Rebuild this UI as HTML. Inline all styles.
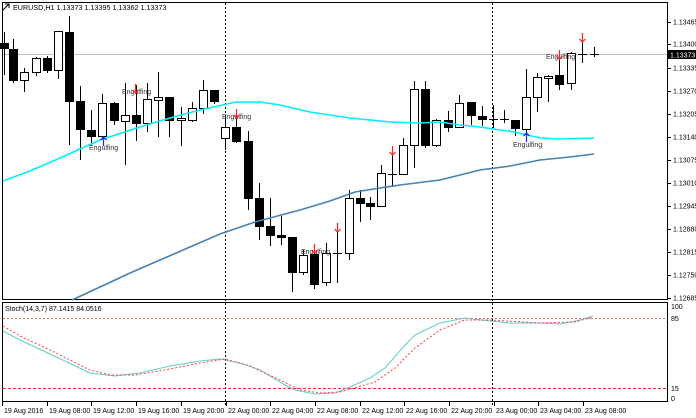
<!DOCTYPE html>
<html><head><meta charset="utf-8"><style>
html,body{margin:0;padding:0;background:#fff;width:696px;height:418px;overflow:hidden}
svg{display:block;font-family:"Liberation Sans",sans-serif}
</style></head><body>
<svg id="s" width="696" height="418" viewBox="0 0 696 418" xmlns="http://www.w3.org/2000/svg" shape-rendering="crispEdges">
<rect width="696" height="418" fill="#fff"/>
<!-- frames -->
<rect x="2.5" y="2.5" width="665" height="297" fill="none" stroke="#000"/>
<rect x="2.5" y="302.5" width="665" height="99" fill="none" stroke="#000"/>
<!-- current price line -->
<line x1="3" y1="54.5" x2="667" y2="54.5" stroke="#c0c0c0"/>
<!-- dotted separators -->
<line x1="225.5" y1="3" x2="225.5" y2="405" stroke="#000" stroke-dasharray="2,2"/>
<line x1="492.5" y1="3" x2="492.5" y2="405" stroke="#000" stroke-dasharray="2,2"/>
<!-- stoch levels -->
<line x1="3" y1="318.5" x2="667" y2="318.5" stroke="#f06060" stroke-dasharray="2,2"/>
<line x1="3" y1="388.5" x2="667" y2="388.5" stroke="#f03030" stroke-dasharray="3,2"/>
<g id="c"></g>
<g shape-rendering="auto" fill="none">
<polyline stroke="#00eeff" stroke-width="1.6" points="3,181 30,171 60,158 100,140 140,127 170,118 200,110 236,102 260,102 280,105 310,112 350,118 390,122 420,123 440,122 460,125 480,127 500,130 515,132 540,138 560,139 594,138"/>
<polyline stroke="#4682b4" stroke-width="1.6" points="72,300 100,287 130,273 160,260 190,247 220,234 255,222 300,210 330,201 355,192 380,188 400,185 440,180 480,170 510,166 540,160 570,157 594,154"/>
<polyline stroke="#5fcfc8" stroke-width="1" points="3,331 20,340 50,354 90,373 115,376 140,373 170,366 200,361 220,359 240,363 260,370 285,385 295,390 315,394 335,393 350,387 370,378 385,368 405,345 415,335 440,323 465,318 490,321 510,323 540,323 560,324 580,320 593,316"/>
<polyline stroke="#ff4040" stroke-width="1" stroke-dasharray="2,2" points="3,326 20,336 50,350 90,370 110,375 135,375 170,369 200,363 225,359 250,366 280,380 300,390 320,393 340,392 375,382 395,368 415,348 440,330 465,320 490,320 540,323 575,322 593,317"/>
</g>
<g font-size="7" fill="#333">
<text x="89" y="150">Engulfing</text>
<text x="122" y="94">Engulfing</text>
<text x="222" y="119">Engulfing</text>
<text x="301" y="254">Engulfing</text>
<text x="513" y="147">Engulfing</text>
<text x="546" y="59">Engulfing</text>
</g>
<g id="ar" shape-rendering="auto" fill="none" stroke-width="1.2"></g>
<!-- price axis -->
<g font-size="7" fill="#000" id="pa"></g>
<rect x="668" y="50" width="28" height="9" fill="#000"/>
<text x="670" y="57.5" font-size="7" fill="#fff">1.13373</text>
<g font-size="7" fill="#000">
<text x="671" y="309">100</text><text x="671" y="321">85</text><text x="671" y="391">15</text><text x="671" y="401">0</text>
</g>
<g font-size="7" fill="#000" id="ta"></g>
<!-- header -->
<path d="M3 10 L9 4 M5 4 L9 4 L9 8" stroke="#000" fill="none" shape-rendering="auto"/>
<text x="13" y="10" font-size="7.2" fill="#000">EURUSD,H1  1.13373 1.13395 1.13362 1.13373</text>
<text x="5" y="311" font-size="7" fill="#000">Stoch(14,3,7) 87.1415 84.0516</text>
</svg>
<script>
var C=[[4,43,48,1,32,75],[13,49,80,1,39,83],[24,72,80,0,68,92],[36,58,72,0,57,76],[47,58,70,1,56,73],[58,31,70,0,31,79],[69,32,101,1,16,145],[80,101,129,1,86,160],[91,130,136,1,110,145],[102,103,136,0,94,140],[114,103,120,1,102,125],[125,115,121,0,83,165],[136,115,123,1,85,141],[147,99,123,0,83,132],[158,97,100,0,72,137],[169,97,120,1,97,137],[181,118,120,0,107,146],[192,108,120,0,102,122],[203,90,108,0,80,114],[214,90,101,1,90,104],[225,127,138,0,115,150],[236,127,141,1,118,143],[248,141,198,1,131,210],[259,198,226,1,183,240],[270,226,235,1,198,246],[281,235,237,1,216,245],[292,237,272,1,237,292],[303,255,272,0,250,275],[314,254,284,1,250,289],[326,253,282,0,243,286],[337,253,254,2,228,283],[349,198,253,0,190,260],[360,198,203,1,190,222],[370,203,206,1,197,220],[381,173,206,0,165,206],[392,174,175,2,155,187],[403,145,174,0,138,174],[414,89,145,0,81,168],[425,89,145,1,81,148],[436,120,145,0,119,147],[448,120,127,1,111,132],[459,103,127,0,95,128],[471,102,115,1,102,125],[482,116,119,1,106,126],[493,119,120,2,105,128],[504,119,120,2,110,123],[515,120,128,1,120,136],[526,97,129,0,69,138],[537,77,97,0,73,112],[548,76,78,0,75,102],[559,75,84,1,53,90],[571,53,83,0,52,90],[582,54,55,2,37,63],[594,54,55,2,47,57]];
var ns="http://www.w3.org/2000/svg",g=document.getElementById('c'),h='';
C.forEach(function(c){var x=c[0];h+='<line x1="'+(x+.5)+'" y1="'+c[4]+'" x2="'+(x+.5)+'" y2="'+c[5]+'" stroke="#000"/>';
if(c[3]==2)h+='<line x1="'+(x-4)+'" y1="'+(c[1]+.5)+'" x2="'+(x+5)+'" y2="'+(c[1]+.5)+'" stroke="#000"/>';
else h+='<rect x="'+(x-3.5)+'" y="'+(c[1]+.5)+'" width="8" height="'+Math.max(1,c[2]-c[1])+'" fill="'+(c[3]?'#000':'#fff')+'" stroke="#000"/>';});
g.innerHTML=h;
var A=[[135,84,93,0],[236,109,118,0],[314,244,253,0],[337,223,232,0],[392,146,155,0],[559,50,59,0],[582,33,42,0],[103,137,146,1],[526,133,142,1]],a='';
A.forEach(function(r){var x=r[0]+.5;if(!r[3])a+='<path d="M'+x+' '+r[1]+' V'+r[2]+' M'+(x-3)+' '+(r[2]-3)+' L'+x+' '+r[2]+' L'+(x+3)+' '+(r[2]-3)+'" stroke="#ff2020"/>';
else a+='<path d="M'+x+' '+r[2]+' V'+r[1]+' M'+(x-3)+' '+(r[1]+3)+' L'+x+' '+r[1]+' L'+(x+3)+' '+(r[1]+3)+'" stroke="#2020ff"/>';});
document.getElementById('ar').innerHTML=a;
var P=['1.13465','1.13400','1.13335','1.13270','1.13205','1.13140','1.13075','1.13010','1.12945','1.12880','1.12815','1.12750','1.12685'],Y=[22,44,68,91,114,137,160,183,206,229,252,275,298],p='';
P.forEach(function(t,i){p+='<line x1="668" y1="'+(Y[i]+.5)+'" x2="671" y2="'+(Y[i]+.5)+'" stroke="#000"/><text x="673" y="'+(Y[i]+2.5)+'">'+t+'</text>';});
document.getElementById('pa').innerHTML=p;
var T=['19 Aug 2016','19 Aug 08:00','19 Aug 12:00','19 Aug 16:00','19 Aug 20:00','22 Aug 00:00','22 Aug 04:00','22 Aug 08:00','22 Aug 12:00','22 Aug 16:00','22 Aug 20:00','23 Aug 00:00','23 Aug 04:00','23 Aug 08:00'],t='';
T.forEach(function(s,i){var x=Math.round(2+44.7*i)+.5;t+='<line x1="'+x+'" y1="402" x2="'+x+'" y2="406" stroke="#000"/><text x="'+(x+1.5)+'" y="413">'+s+'</text>';});
document.getElementById('ta').innerHTML=t;
</script>
</body></html>
